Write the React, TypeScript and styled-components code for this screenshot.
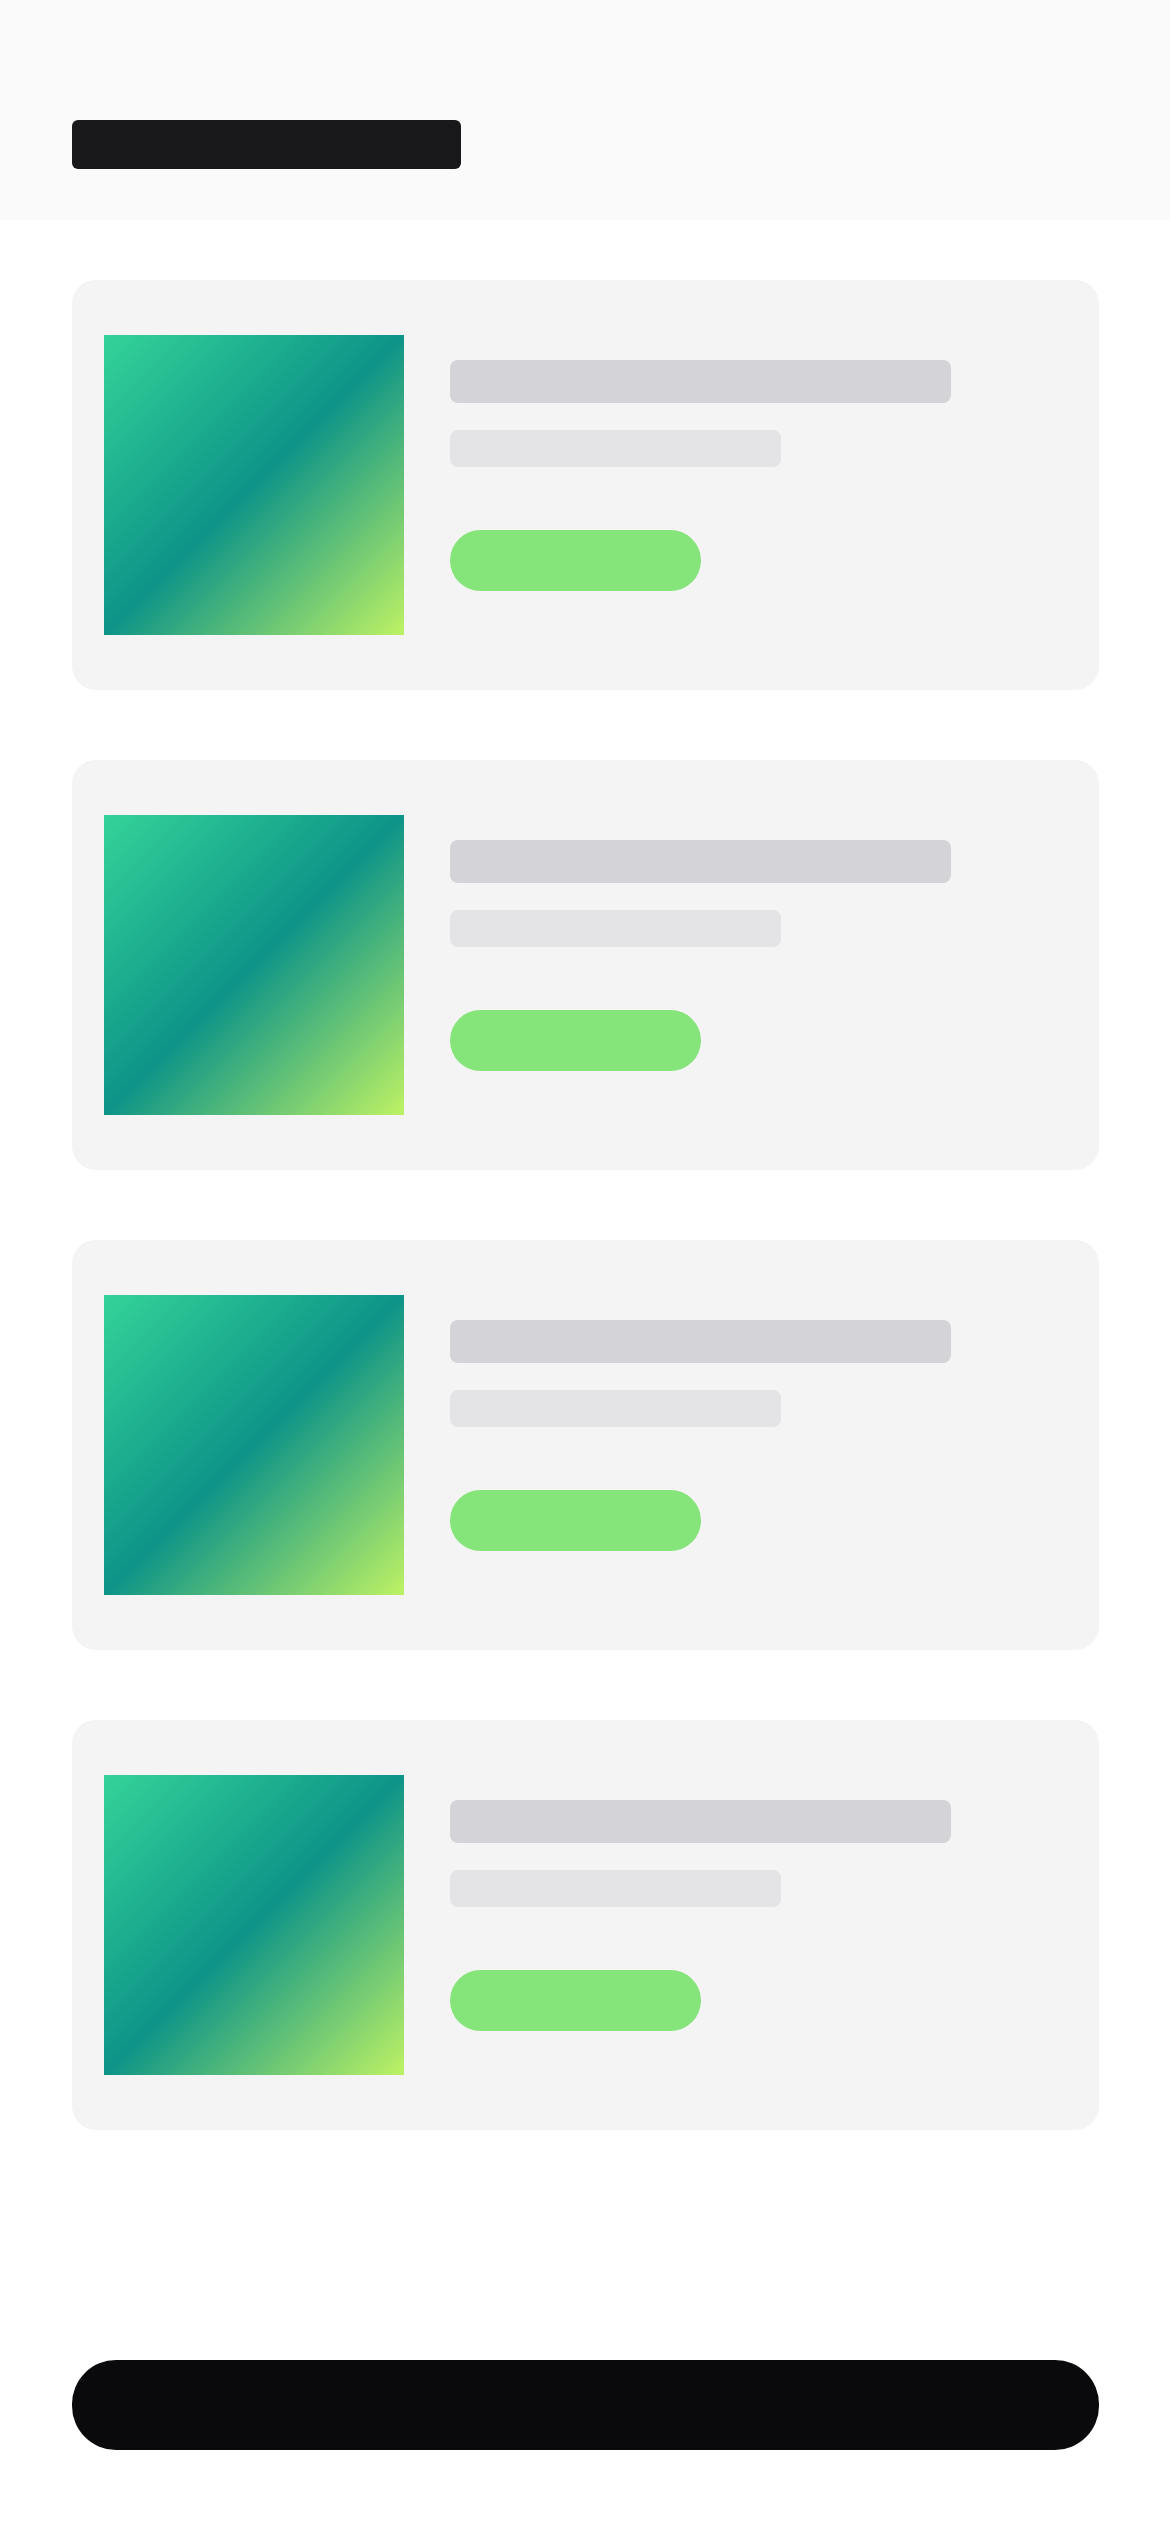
import React from "react";
import styled, { createGlobalStyle } from "styled-components";

const GlobalStyle = createGlobalStyle`
  html, body {
    margin: 0;
    padding: 0;
    background: #ffffff;
    font-family: "Inter", "Liberation Sans", sans-serif;
  }
  * { box-sizing: border-box; }
`;

const Page = styled.div`
  width: 100%;
  min-height: 100vh;
  display: flex;
  flex-direction: column;
  background: #ffffff;
`;

const Header = styled.header`
  background: #fafafa;
  height: 220px;
  padding: 120px 72px 0;
`;

const HeaderTitle = styled.div`
  width: 389px;
  height: 49px;
  border-radius: 6px;
  background: #18181b;
`;

const List = styled.main`
  display: flex;
  flex-direction: column;
  gap: 70px;
  padding: 60px 71px 0 72px;
`;

const Card = styled.article`
  display: flex;
  align-items: flex-start;
  gap: 46px;
  height: 410px;
  padding: 55px 32px;
  border-radius: 24px;
  background: #f4f4f4;
`;

const Thumb = styled.div`
  flex: 0 0 300px;
  width: 300px;
  height: 300px;
  background: linear-gradient(135deg, #34d399 0%, #0d9488 50%, #bef264 100%);
`;

const Info = styled.div`
  display: flex;
  flex-direction: column;
  align-items: flex-start;
  padding-top: 25px;
`;

const Line = styled.div<{ $w: number; $h: number; $color: string; $mb: number }>`
  width: ${(p) => p.$w}px;
  height: ${(p) => p.$h}px;
  margin-bottom: ${(p) => p.$mb}px;
  border-radius: 8px;
  background: ${(p) => p.$color};
`;

const Pill = styled.div`
  width: 251px;
  height: 61px;
  border-radius: 31px;
  background: #86e57a;
`;

const Spacer = styled.div`
  flex: 1;
`;

const Footer = styled.footer`
  padding: 0 71px 82px 72px;
`;

const PrimaryButton = styled.div`
  height: 90px;
  border-radius: 44px;
  background: #0a0a0c;
`;

export default function App() {
  const items = [0, 1, 2, 3];
  return (
    <>
      <GlobalStyle />
      <Page>
        <Header>
          <HeaderTitle />
        </Header>
        <List>
          {items.map((i) => (
            <Card key={i}>
              <Thumb />
              <Info>
                <Line $w={501} $h={43} $color="#d4d4d8" $mb={27} />
                <Line $w={331} $h={37} $color="#e4e4e7" $mb={63} />
                <Pill />
              </Info>
            </Card>
          ))}
        </List>
        <Spacer />
        <Footer>
          <PrimaryButton />
        </Footer>
      </Page>
    </>
  );
}
